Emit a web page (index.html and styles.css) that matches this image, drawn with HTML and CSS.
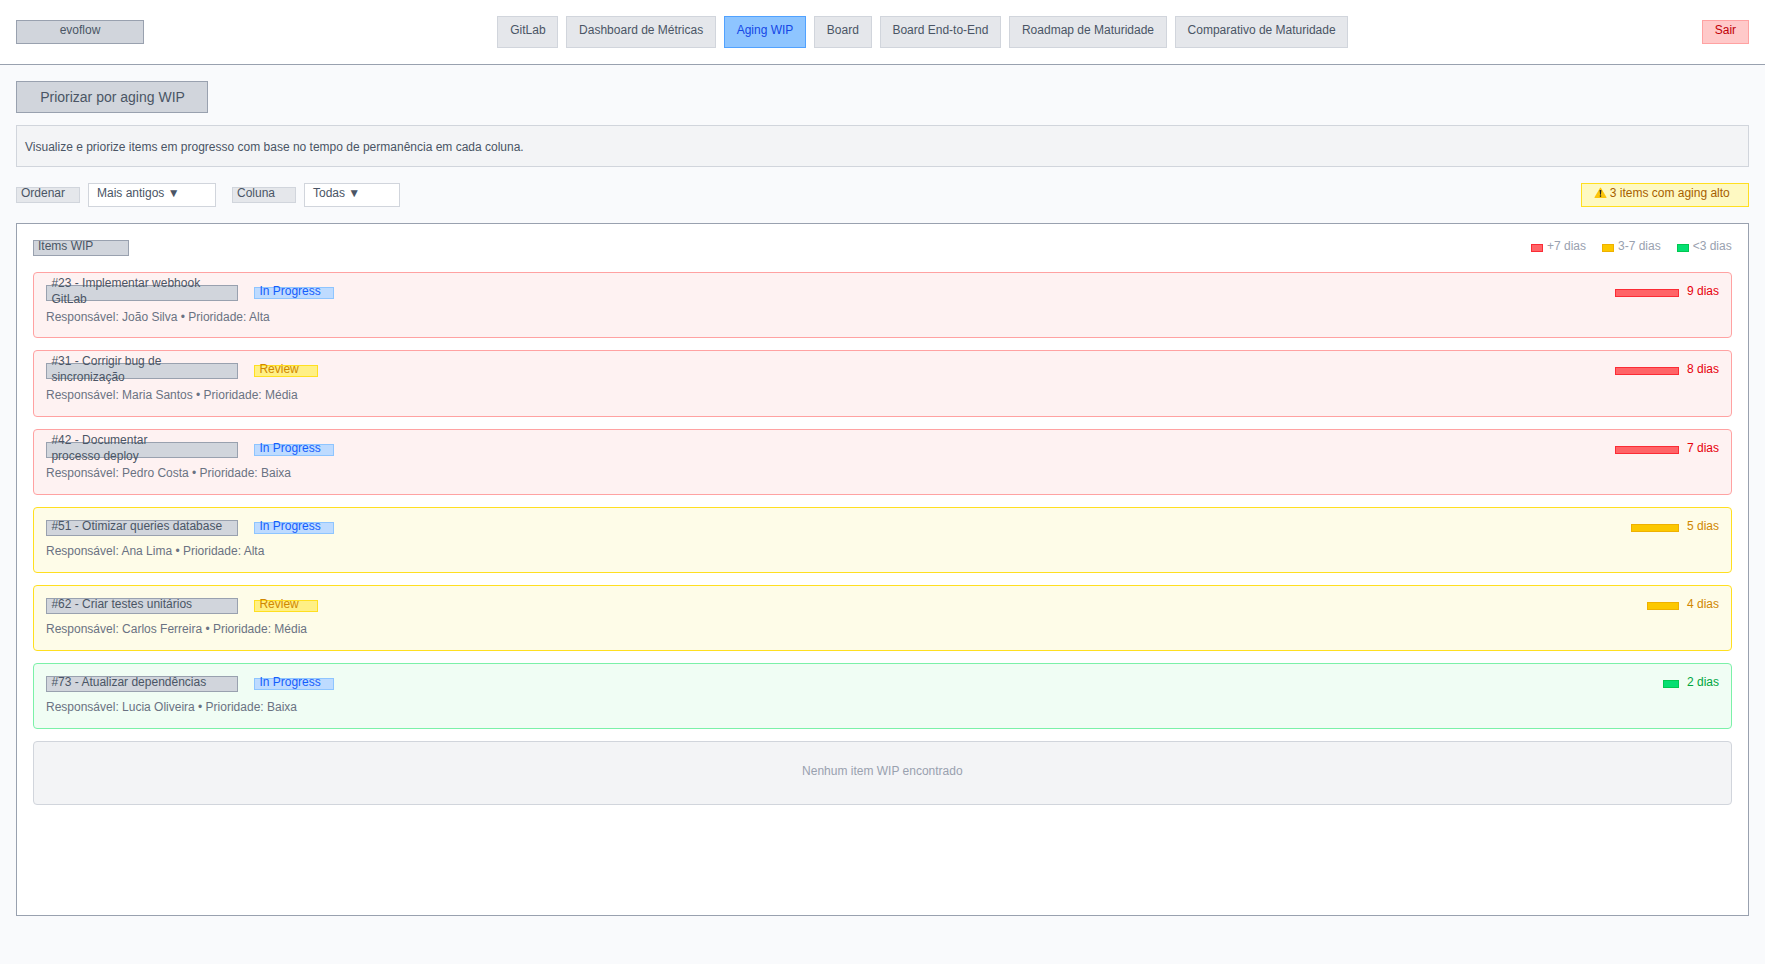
FILE: index.html
```html
<!DOCTYPE html>
<html lang="pt-BR">
<head>
<meta charset="utf-8">
<title>evoflow</title>
<link rel="stylesheet" href="styles.css">
</head>
<body>
<header class="header">
  <div class="logo">evoflow</div>
  <nav class="nav">
    <a class="nav-item">GitLab</a>
    <a class="nav-item">Dashboard de Métricas</a>
    <a class="nav-item active">Aging WIP</a>
    <a class="nav-item">Board</a>
    <a class="nav-item">Board End-to-End</a>
    <a class="nav-item">Roadmap de Maturidade</a>
    <a class="nav-item">Comparativo de Maturidade</a>
  </nav>
  <a class="logout">Sair</a>
</header>
<main class="main">
  <h1 class="title">Priorizar por aging WIP</h1>
  <p class="description">Visualize e priorize items em progresso com base no tempo de permanência em cada coluna.</p>
  <div class="toolbar">
    <div class="filters">
      <div class="filter"><span class="label">Ordenar</span><div class="select wide">Mais antigos ▼</div></div>
      <div class="filter"><span class="label">Coluna</span><div class="select">Todas ▼</div></div>
    </div>
    <div class="alert">
      <svg class="warn" viewBox="0 0 13 12"><path d="M6 .9Q6.5.1 7 .9L12.5 10.2Q12.8 11 12 11H1Q.2 11 .5 10.2Z" fill="#fcc50c"/><path d="M5.6 3h1.8L6.9 7.8h-.8Z" fill="#222"/><circle cx="6.5" cy="9.1" r=".8" fill="#222"/></svg>
      <span>3 items com aging alto</span>
    </div>
  </div>
  <section class="panel">
    <div class="panel-head">
      <div class="panel-title">Items WIP</div>
      <div class="legend">
        <div class="legend-item"><i class="swatch red"></i>+7 dias</div>
        <div class="legend-item"><i class="swatch yellow"></i>3-7 dias</div>
        <div class="legend-item"><i class="swatch green"></i>&lt;3 dias</div>
      </div>
    </div>
    <div class="list">
      <article class="card high">
        <div class="row"><div class="item-title"><span>#23 - Implementar webhook GitLab</span></div><span class="badge progress">In Progress</span><div class="aging"><i class="bar" style="width:64px"></i><span>9 dias</span></div></div>
        <p class="meta">Responsável: João Silva • Prioridade: Alta</p>
      </article>
      <article class="card high">
        <div class="row"><div class="item-title"><span>#31 - Corrigir bug de sincronização</span></div><span class="badge review">Review</span><div class="aging"><i class="bar" style="width:64px"></i><span>8 dias</span></div></div>
        <p class="meta">Responsável: Maria Santos • Prioridade: Média</p>
      </article>
      <article class="card high">
        <div class="row"><div class="item-title"><span>#42 - Documentar<br>processo deploy</span></div><span class="badge progress">In Progress</span><div class="aging"><i class="bar" style="width:64px"></i><span>7 dias</span></div></div>
        <p class="meta">Responsável: Pedro Costa • Prioridade: Baixa</p>
      </article>
      <article class="card medium">
        <div class="row"><div class="item-title"><span>#51 - Otimizar queries database</span></div><span class="badge progress">In Progress</span><div class="aging"><i class="bar" style="width:48px"></i><span>5 dias</span></div></div>
        <p class="meta">Responsável: Ana Lima • Prioridade: Alta</p>
      </article>
      <article class="card medium">
        <div class="row"><div class="item-title"><span>#62 - Criar testes unitários</span></div><span class="badge review">Review</span><div class="aging"><i class="bar" style="width:32px"></i><span>4 dias</span></div></div>
        <p class="meta">Responsável: Carlos Ferreira • Prioridade: Média</p>
      </article>
      <article class="card low">
        <div class="row"><div class="item-title"><span>#73 - Atualizar dependências</span></div><span class="badge progress">In Progress</span><div class="aging"><i class="bar" style="width:16px"></i><span>2 dias</span></div></div>
        <p class="meta">Responsável: Lucia Oliveira • Prioridade: Baixa</p>
      </article>
      <div class="empty">Nenhum item WIP encontrado</div>
    </div>
  </section>
</main>
</body>
</html>
```
FILE: styles.css
```css
* { box-sizing: border-box; margin: 0; padding: 0; }
body {
  min-height: 964px;
  background: #f9fafc;
  color: #4a5565;
  font: 12px/16px "Liberation Sans", Arial, sans-serif;
}
.header {
  display: flex;
  align-items: center;
  justify-content: space-between;
  height: 65px;
  padding: 0 16.3px 0 16px;
  background: #fff;
  border-bottom: 1px solid #99a1af;
}
.logo {
  width: 128px;
  height: 24px;
  padding-top: 1px;
  text-align: center;
  background: #d1d5dc;
  border: 1px solid #99a1af;
}
.nav { display: flex; gap: 8px; }
.nav-item {
  height: 32px;
  padding: 5px 11.75px;
  background: #e5e7eb;
  border: 1px solid #d1d5dc;
}
.nav-item.active { color: #1447e6; background: #8ec5ff; border-color: #51a2ff; }
.logout {
  height: 24px;
  padding: 1px 11.6px 1px 11.9px;
  color: #c10007;
  background: #ffc9c9;
  border: 1px solid #ffa2a2;
}
.main { padding: 16px 16.3px 0 16px; }
.title {
  width: 192px;
  height: 32px;
  padding: 5px 0 0 1px;
  font-size: 14px;
  font-weight: 400;
  line-height: 20px;
  text-align: center;
  background: #d1d5dc;
  border: 1px solid #99a1af;
}
.description {
  height: 42px;
  margin-top: 12px;
  padding: 13px 8px 0;
  background: #f3f4f6;
  border: 1px solid #d1d5dc;
}
.toolbar { display: flex; justify-content: space-between; margin-top: 16px; }
.filters { display: flex; gap: 16px; }
.filter { display: flex; align-items: center; gap: 8px; }
.label {
  display: flex;
  align-items: center;
  width: 64px;
  height: 16px;
  padding: 0 4px 4px;
  background: #e5e7eb;
  border: 1px solid #d1d5dc;
}
.select {
  width: 96px;
  height: 24px;
  padding: 1px 8px;
  background: #fff;
  border: 1px solid #d1d5dc;
}
.select.wide { width: 128px; }
.alert {
  display: flex;
  gap: 3px;
  width: 168px;
  height: 24px;
  padding: 1px 12px;
  color: #a65f00;
  background: #fef9c2;
  border: 1px solid #ffdf20;
}
.warn { width: 13px; height: 12px; margin-top: 2px; }
.panel {
  height: 693px;
  margin-top: 16px;
  padding: 16px;
  background: #fff;
  border: 1px solid #99a1af;
}
.panel-head { display: flex; justify-content: space-between; height: 16px; }
.panel-title {
  display: flex;
  align-items: center;
  width: 96px;
  height: 16px;
  padding: 0 4px 4px;
  background: #d1d5dc;
  border: 1px solid #99a1af;
}
.legend { display: flex; gap: 16px; margin-top: -2px; color: #99a1af; }
.legend-item { display: flex; gap: 4px; }
.swatch { width: 12px; height: 8px; margin-top: 6px; border: 1px solid; }
.swatch.red { background: #ff6467; border-color: #fb2c36; }
.swatch.yellow { background: #fcc800; border-color: #efb100; }
.swatch.green { background: #05df72; border-color: #00c950; }
.list { display: flex; flex-direction: column; gap: 12px; margin-top: 16.3px; }
.card {
  height: 66.17px;
  padding: 12px;
  border: 1px solid;
  border-radius: 4px;
}
.high { background: #fef2f2; border-color: #ffa2a2; }
.medium { background: #fefce8; border-color: #ffdf20; }
.low { background: #f0fdf4; border-color: #7bf1a8; }
.row { display: flex; align-items: center; gap: 16px; height: 16px; }
.item-title {
  display: flex;
  align-items: center;
  width: 192px;
  height: 16px;
  padding: 0 4px 4px 4.4px;
  background: #d1d5dc;
  border: 1px solid #99a1af;
}
.badge {
  display: flex;
  align-items: center;
  height: 12px;
  padding: 0 4px 4px 4.4px;
  border: 1px solid;
}
.progress { width: 80px; color: #155dfc; background: #bedbff; border-color: #8ec5ff; }
.review { width: 64px; color: #d08700; background: #fff085; border-color: #ffdf20; }
.aging { display: flex; gap: 8px; height: 16px; margin: -4px -0.3px 0 auto; }
.bar { height: 8px; margin-top: 6px; border: 1px solid; }
.high .aging { color: #e7000b; }
.medium .aging { color: #d08700; }
.low .aging { color: #00a63e; }
.high .bar { background: #ff6467; border-color: #fb2c36; }
.medium .bar { background: #fcc800; border-color: #efb100; }
.low .bar { background: #05df72; border-color: #00c950; }
.meta { margin-top: 7.3px; color: #6a7282; }
.empty {
  height: 64px;
  padding-top: 21px;
  text-align: center;
  color: #99a1af;
  background: #f3f4f6;
  border: 1px solid #d1d5dc;
  border-radius: 4px;
}
```
